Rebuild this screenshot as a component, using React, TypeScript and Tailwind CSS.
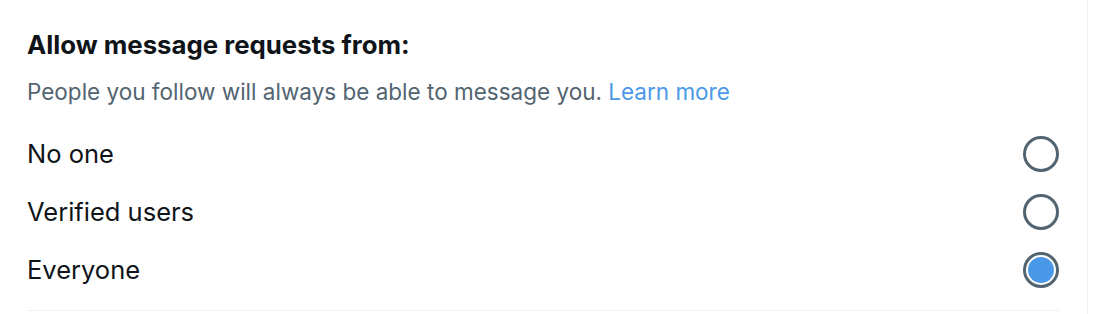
const options = [
  { label: 'No one', checked: false },
  { label: 'Verified users', checked: false },
  { label: 'Everyone', checked: true },
]

function Radio({ checked }: { checked: boolean }) {
  return (
    <span className="flex h-[36px] w-[36px] items-center justify-center rounded-full border-[3px] border-[#536471]">
      {checked && <span className="h-[26px] w-[26px] rounded-full bg-[#4a99e9]" />}
    </span>
  )
}

export default function App() {
  return (
    <div className="h-[314px] w-[1108px] overflow-hidden bg-white font-['Inter',sans-serif] text-[#0f1419]">
      <div className="h-full w-[1088px] border-r border-[#eff3f4] pl-[27px] pr-[28px] pt-[30px]">
        <h2 className="text-[25.8px] font-bold leading-[30px]">Allow message requests from:</h2>
        <p className="mt-[18px] text-[22.5px] leading-[28px] text-[#536471]">
          People you follow will always be able to message you.{' '}
          <a className="text-[#4a99e9]">Learn more</a>
        </p>
        <div className="mt-[19px] border-b border-[#eff3f4] pb-[11px]">
          {options.map((o) => (
            <div key={o.label} className="flex h-[58px] items-center justify-between">
              <span className="text-[25.5px] leading-[30px]">{o.label}</span>
              <Radio checked={o.checked} />
            </div>
          ))}
        </div>
      </div>
    </div>
  )
}
